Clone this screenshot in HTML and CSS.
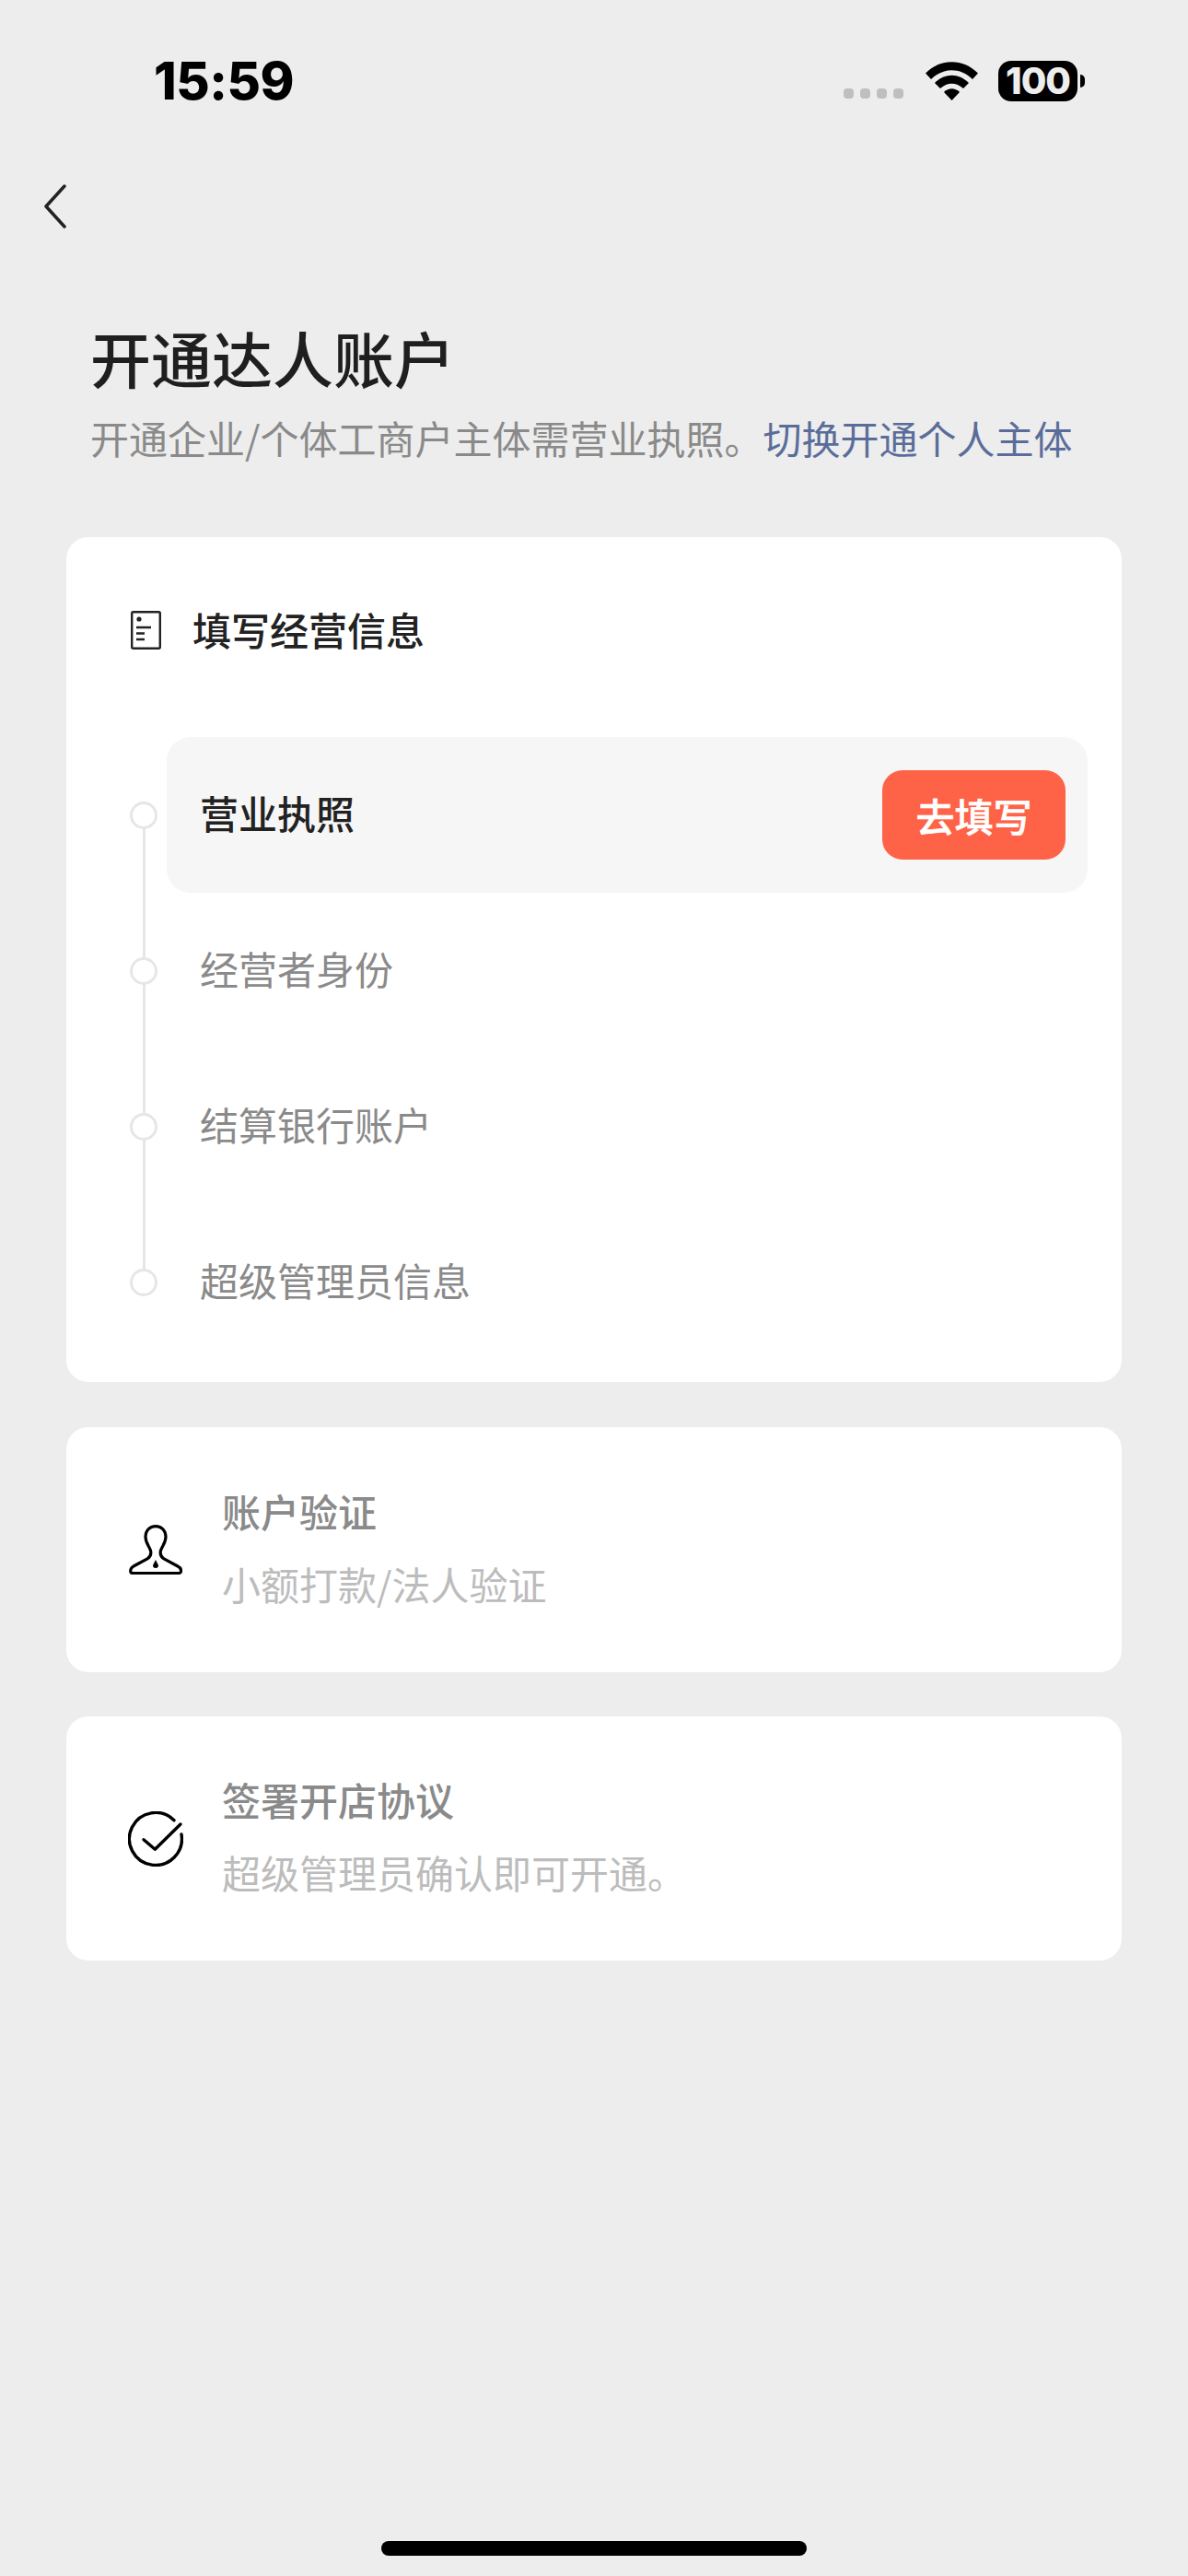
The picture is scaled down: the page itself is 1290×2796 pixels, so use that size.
FILE: index.html
```html
<!DOCTYPE html>
<html lang="zh-CN">
<head>
  <meta charset="UTF-8" />
  <meta name="viewport" content="width=device-width, initial-scale=1.0"/>
  <title>开通达人账户</title>
  <link rel="stylesheet" href="styles.css">
</head>
<body>

<div class="page">

  <!-- Status bar -->
  <div class="status-bar">
    <div class="time">15:59</div>
    <div class="status-icons">
      <div class="signal"><span></span><span></span><span></span><span></span></div>
      <svg class="wifi" viewBox="0 0 57 42">
        <path d="M0 12.5C16-4 41-4 57 12.5L51 19C38 6 19 6 6 19Z"/>
        <path d="M10 23C21 12 36 12 47 23L41 29C33 22 24 22 16 29Z"/>
        <path d="M20 33C25 28 32 28 37 33L28.5 42Z"/>
      </svg>
      <div class="battery">
        <div class="battery-body">100</div>
        <div class="battery-tip"></div>
      </div>
    </div>
  </div>

  <!-- Back -->
  <div class="nav">
    <svg class="back" viewBox="0 0 24 48">
      <path d="M22 2L2 24L22 46"/>
    </svg>
  </div>

  <header>
    <h1>开通达人账户</h1>
    <p>开通企业/个体工商户主体需营业执照。<a href="#">切换开通个人主体</a></p>
  </header>

  <div class="cards">
    <!-- Business info -->
    <div class="card card-steps">
      <div class="card-head">
        <svg class="doc-icon" viewBox="0 0 33 42">
          <rect x="1.2" y="1.2" width="30.6" height="39.6" rx="1.5"/>
          <circle class="solid" cx="9" cy="9" r="2.6"/>
          <path d="M6 18H22M6 24.5H15M6 31H15"/>
        </svg>
        <span>填写经营信息</span>
      </div>
      <div class="steps">
        <div class="step">
          <div class="dot"></div>
          <div class="step-body active">
            <span>营业执照</span>
            <a href="#" class="btn">去填写</a>
          </div>
        </div>
        <div class="step">
          <div class="dot"></div>
          <div class="step-body"><span>经营者身份</span></div>
        </div>
        <div class="step">
          <div class="dot"></div>
          <div class="step-body"><span>结算银行账户</span></div>
        </div>
        <div class="step">
          <div class="dot"></div>
          <div class="step-body"><span>超级管理员信息</span></div>
        </div>
      </div>
    </div>

    <!-- Account verification -->
    <div class="card card-row">
      <div class="row-icon">
        <svg class="person-icon" viewBox="0 0 58 54">
          <path d="M29 1.6C22 1.6 18 7 18 13C18 20 22 23 23.5 28C24.5 32 23 35 20 37L5 45C2.5 46.5 1.7 48 1.7 50C1.7 52 2.5 52.5 4 52.5H54C56 52.5 56.6 52 56.6 50C56.6 48 56 46.5 53 45L38 37C35 35 33.5 32 34.5 28C36 23 40 20 40 13C40 7 36 1.6 29 1.6Z"/>
          <path class="solid" d="M29 38L32 44A3 3 0 1 1 26 44Z"/>
        </svg>
      </div>
      <div class="row-text">
        <h3>账户验证</h3>
        <p>小额打款/法人验证</p>
      </div>
    </div>

    <!-- Agreement -->
    <div class="card card-row">
      <div class="row-icon">
        <svg class="check-icon" viewBox="0 0 60 60">
          <path d="M50 9.7A28.5 28.5 0 1 0 58 25"/>
          <path d="M17 30.7L29.3 41.3L57 14"/>
        </svg>
      </div>
      <div class="row-text">
        <h3>签署开店协议</h3>
        <p>超级管理员确认即可开通。</p>
      </div>
    </div>
  </div>

  <div class="home-bar"></div>
</div>

</body>
</html>
```

FILE: styles.css
```css
* {
  margin: 0;
  padding: 0;
  box-sizing: border-box;
  font-family: "Noto Sans CJK SC", "Liberation Sans", sans-serif;
}

body {
  background-color: #ededed;
  color: #1f1f1f;
}

.page {
  height: 2796px;
  display: flex;
  flex-direction: column;
  overflow: hidden;
}

/* Status bar */
.status-bar {
  height: 176px;
  display: flex;
  justify-content: space-between;
  align-items: center;
  padding: 0 112px 0 167px;
}

.time {
  font-family: Inter, "Liberation Sans", sans-serif;
  font-size: 56px;
  font-weight: 800;
  color: #000;
  letter-spacing: -0.5px;
}

.status-icons {
  display: flex;
  align-items: center;
}

.signal {
  display: flex;
  gap: 7px;
  margin-top: 26px;
  margin-right: 24px;
}

.signal span {
  width: 11px;
  height: 11px;
  border-radius: 4px;
  background: #bfbfbf;
}

.wifi {
  width: 57px;
  height: 42px;
  margin-right: 22px;
  fill: #000;
}

.battery {
  display: flex;
  align-items: center;
}

.battery-body {
  width: 86px;
  height: 44px;
  border-radius: 14px;
  background: #000;
  color: #ededed;
  font-family: Inter, "Liberation Sans", sans-serif;
  font-size: 40px;
  font-weight: 800;
  line-height: 44px;
  letter-spacing: -1px;
  text-align: center;
}

.battery-tip {
  width: 5px;
  height: 14px;
  margin-left: 3px;
  border-radius: 0 7px 7px 0;
  background: #000;
}

/* Back */
.nav {
  height: 95px;
  display: flex;
  align-items: center;
  padding-left: 48px;
}

.back {
  width: 24px;
  height: 48px;
  fill: none;
  stroke: #222;
  stroke-width: 3.5px;
  stroke-linecap: round;
  stroke-linejoin: round;
}

header {
  padding: 71px 0 0 98px;
}

h1 {
  font-size: 66px;
  font-weight: 500;
  line-height: 90px;
}

header p {
  margin-top: 13px;
  font-size: 42px;
  line-height: 60px;
  color: #8a8a8a;
}

header a {
  color: #5a6d9a;
  text-decoration: none;
}

/* Cards */
.cards {
  margin: 78px 72px 0;
  display: flex;
  flex-direction: column;
  gap: 48px;
}

.card {
  background: #fff;
  border-radius: 24px;
}

.card-steps {
  padding: 71px 37px 24px 69px;
  margin-bottom: 1px;
}

.card-head {
  height: 60px;
  display: flex;
  align-items: center;
  gap: 34px;
  padding-left: 1px;
  font-size: 42px;
  font-weight: 500;
  color: #222;
}

.card-head span {
  margin-top: -4px;
}

.doc-icon {
  width: 33px;
  height: 42px;
  fill: none;
  stroke: #222;
  stroke-width: 2.4px;
}

.doc-icon .solid {
  fill: #222;
  stroke: none;
}

.steps {
  margin-top: 86px;
}

.step {
  position: relative;
  display: flex;
  align-items: center;
  gap: 10px;
}

/* line between two dots */
.step:not(:last-child)::before {
  content: "";
  position: absolute;
  left: 14px;
  top: 99px;
  width: 3px;
  height: 140px;
  background: #e6e6e6;
}

.dot {
  width: 30px;
  height: 30px;
  flex-shrink: 0;
  border: 3px solid #e6e6e6;
  border-radius: 50%;
  background: #fff;
}

.step-body {
  flex: 1;
  height: 169px;
  display: flex;
  justify-content: space-between;
  align-items: center;
  padding: 0 24px 0 36px;
  font-size: 42px;
  color: #8a8a8a;
}

.step-body span {
  margin-top: -6px;
}

.step-body.active {
  background: #f6f6f6;
  border-radius: 26px;
  font-weight: 500;
  color: #222;
}

.btn {
  width: 199px;
  height: 97px;
  display: flex;
  justify-content: center;
  align-items: center;
  border-radius: 22px;
  background: #ff6347;
  color: #fff;
  font-size: 42px;
  font-weight: 500;
  text-decoration: none;
  -webkit-text-stroke: 0.6px #fff;
}

.card-row {
  height: 266px;
  display: flex;
  align-items: center;
  gap: 42px;
  padding-left: 67px;
}

.card-row:last-child {
  height: 265px;
}

.row-icon {
  width: 60px;
  display: flex;
  justify-content: center;
}

.person-icon {
  width: 58px;
  height: 54px;
  fill: none;
  stroke: #000;
  stroke-width: 3.2px;
}

.person-icon .solid {
  fill: #000;
  stroke: none;
}

.check-icon {
  width: 60px;
  height: 60px;
  fill: none;
  stroke: #000;
  stroke-width: 3.4px;
  stroke-linecap: round;
  stroke-linejoin: round;
}

.row-text {
  display: flex;
  flex-direction: column;
  gap: 19px;
  margin-top: -6px;
}

.row-text h3 {
  font-size: 42px;
  font-weight: 500;
  line-height: 60px;
  color: #8a8a8a;
}

.row-text p {
  font-size: 42px;
  line-height: 60px;
  color: #bcbcbc;
}

.home-bar {
  width: 462px;
  height: 16px;
  margin: auto auto 22px;
  border-radius: 8px;
  background: #000;
}
```
